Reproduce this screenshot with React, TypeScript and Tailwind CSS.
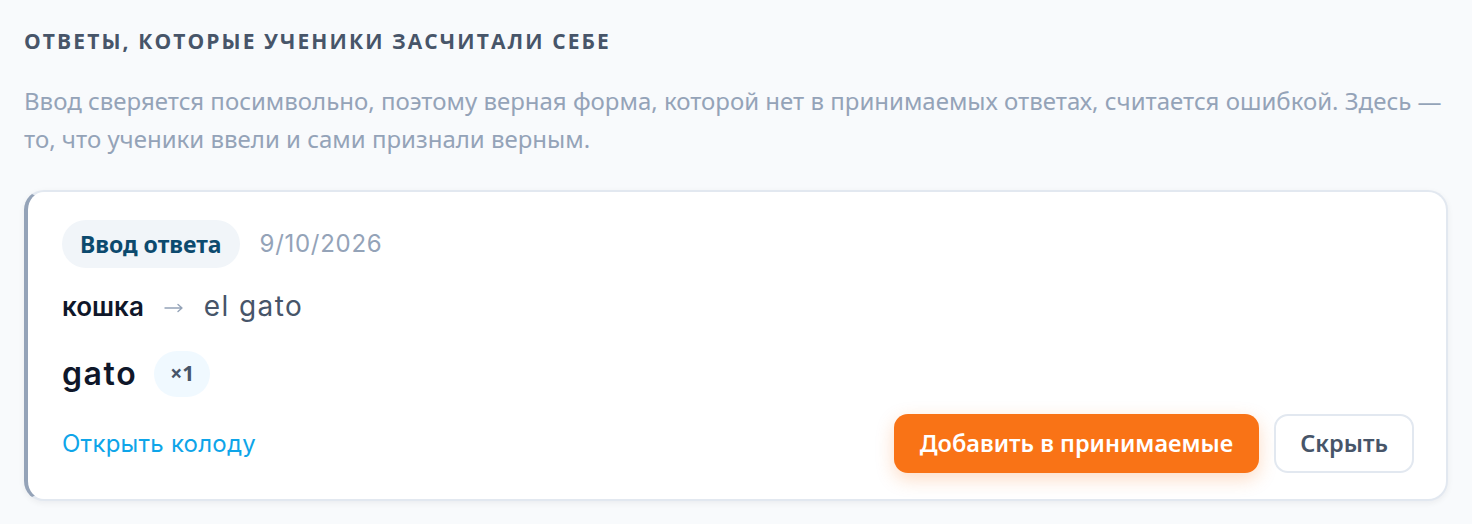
export default function App() {
    const sans = "'Noto Sans', 'Open Sans', sans-serif";
    const geo = "Inter, 'Noto Sans', sans-serif";

    return (
        <div className="min-h-screen bg-[#f8fafc] px-6 pt-[27px]" style={{ fontFamily: sans }}>
            <h3
                className="text-[21px] font-bold uppercase tracking-[0.1em] text-[#475569] leading-[28px]"
                style={{ fontFamily: "'Open Sans', 'Noto Sans', sans-serif" }}
            >
                Ответы, которые ученики засчитали себе
            </h3>
            <p className="mt-[27px] text-[24px] leading-[38px] text-[#94a3b8]">
                Ввод сверяется посимвольно, поэтому верная форма, которой нет в принимаемых ответах, считается ошибкой. Здесь —
                то, что ученики ввели и сами признали верным.
            </p>

            {/* карточка ответа */}
            <div className="mt-[32px] rounded-[20px] border-2 border-l-4 border-[#e2e8f0] border-l-[#94a3b8] bg-white pl-[34px] pr-[32px] pt-[28px] pb-[26px] shadow-[0_2px_6px_rgba(15,23,42,0.06)]">
                <div className="flex items-center gap-5">
                    <span className="flex h-[48px] items-center rounded-full bg-[#f1f5f9] px-[18px] text-[23px] font-bold text-[#0c4a6e]">
                        Ввод ответа
                    </span>
                    <span className="text-[24px] tracking-[0.03em] text-[#94a3b8]" style={{ fontFamily: geo }}>
                        9/10/2026
                    </span>
                </div>

                <div className="mt-[18px] flex h-[40px] items-center" style={{ fontFamily: geo }}>
                    <span className="text-[26px] font-semibold text-[#0f172a]">кошка</span>
                    <svg className="mx-[20px] mt-[3px]" width="20" height="10" viewBox="0 0 20 10" fill="none">
                        <path d="M1 5h17M14 1.5L18 5l-4 3.5" stroke="#94a3b8" strokeWidth="1.4" strokeLinecap="round" strokeLinejoin="round" />
                    </svg>
                    <span className="text-[28px] tracking-[0.05em] text-[#475569]">el gato</span>
                </div>

                <div className="mt-[24px] flex items-center gap-[17px]">
                    <span className="text-[32px] font-semibold tracking-[0.05em] text-[#0f172a]" style={{ fontFamily: geo }}>
                        gato
                    </span>
                    <span className="flex h-[46px] w-[56px] items-center justify-center rounded-full bg-[#f0f9ff] text-[21px] font-bold text-[#475569]">
                        ×1
                    </span>
                </div>

                <div className="mt-[16px] flex items-center justify-between">
                    <a className="text-[24px] tracking-[0.01em] text-[#0ea5e9]" style={{ fontFamily: geo }}>
                        Открыть колоду
                    </a>
                    <div className="flex items-center gap-[15px]">
                        <button className="h-[59px] rounded-[14px] bg-[#f97316] px-[26px] text-[23.5px] font-semibold text-white shadow-[0_6px_18px_rgba(249,115,22,0.25)]">
                            Добавить в принимаемые
                        </button>
                        <button className="h-[59px] rounded-[14px] border-2 border-[#e2e8f0] bg-white px-[24px] text-[23.5px] font-semibold text-[#475569]">
                            Скрыть
                        </button>
                    </div>
                </div>
            </div>
        </div>
    );
}
